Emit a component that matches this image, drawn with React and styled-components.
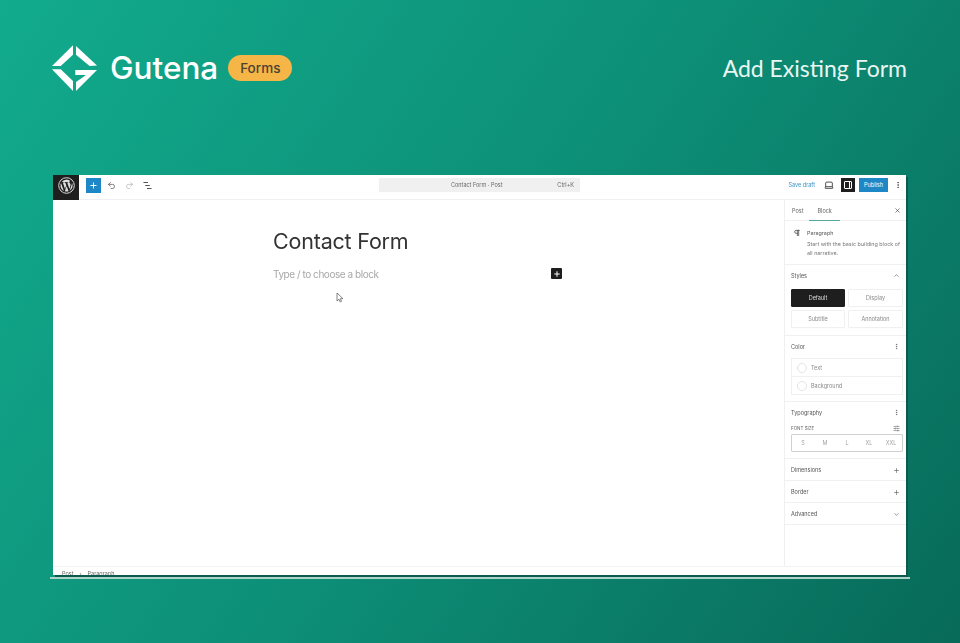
import * as React from "react";
import styled, { createGlobalStyle } from "styled-components";
import { Plus, Undo2, Redo2, Laptop, MoreVertical, X, ChevronUp, ChevronDown, SlidersHorizontal, Pilcrow } from "lucide-react";

const GlobalStyle = createGlobalStyle`
  html, body { margin: 0; padding: 0; }
  body { font-family: "Inter", "Liberation Sans", sans-serif; }
`;

const GutenaLogo = () => (
  <svg width="46" height="46" viewBox="0 0 46 46" fill="#fff">
    <polygon points="21,0.300 0,21 8.700,21 21,9.700" />
    <polygon points="24,1 45,20.500 37.600,21 24,9.700" />
    <polygon points="0,24.300 8.700,24.300 21,36 21,46" />
    <polygon points="23.300,25 45,25 24,46 24,37 34,30 23.300,30" />
  </svg>
);

const WpLogo = () => (
  <svg width="17" height="17" viewBox="0 0 24 24">
    <circle cx="12" cy="12" r="11" fill="none" stroke="#ddd" strokeWidth="1.4" />
    <path
      fill="#ddd"
      d="M3.5 12c0 3.4 2 6.3 4.8 7.7L4.2 8.6A8.500 8.500 0 0 0 3.500 12zM17.700 11.600c0-1-.4-1.800-.7-2.300-.5-.7-.9-1.300-.9-2 0-.8.600-1.500 1.400-1.500h.100A8.500 8.500 0 0 0 5 7.300h.6c.9 0 2.300-.1 2.300-.1.500 0 .5.700 0 .7 0 0-.5.100-1 .1l3 9 1.800-5.500-1.300-3.500c-.4 0-.9-.1-.9-.1-.5 0-.4-.7 0-.7 0 0 1.400.1 2.300.1.900 0 2.300-.1 2.300-.1.500 0 .5.700 0 .7 0 0-.5.100-1 .1l3 8.900.8-2.800c.4-1.100.7-1.900.7-2.600zM12.200 12.700l-2.500 7.400a8.500 8.500 0 0 0 5.200-.1l-.1-.1zM19.500 7.900c0 .3.100.6.100.9 0 .9-.2 1.900-.7 3.100l-2.600 7.500a8.500 8.500 0 0 0 3.200-11.500z"
    />
  </svg>
);

const ListViewIcon = () => (
  <svg width="10" height="9" viewBox="0 0 10 9" stroke="currentColor" strokeWidth="1.2">
    <path d="M0.500 1.200h5M2.500 4.500h5M4.500 7.800h5" />
  </svg>
);

const Cursor = () => (
  <svg width="8" height="11" viewBox="0 0 8 11">
    <path d="M1 1v8l2-1.800 1.200 2.800 1.300-.6L4.300 6.700H7z" fill="#fff" stroke="#666" strokeWidth="0.8" />
  </svg>
);

const Page = styled.div`
  box-sizing: border-box;
  width: 960px;
  height: 643px;
  overflow: hidden;
  padding: 45px 53px 0 52px;
  background: linear-gradient(125deg, #12ab8d 0%, #0d8f77 50%, #086a59 100%);
`;

const Header = styled.header`
  display: flex;
  justify-content: space-between;
  align-items: center;
  height: 46px;
`;

const Brand = styled.div`
  display: flex;
  align-items: center;
`;

const BrandName = styled.span`
  margin-left: 12px;
  font-family: "Inter", sans-serif;
  font-size: 31.500px;
  font-weight: 500;
  line-height: 46px;
  color: #fff;
`;

const Badge = styled.span`
  margin-left: 10px;
  width: 64px;
  height: 26px;
  border-radius: 13px;
  background: #f5b547;
  color: #4a4232;
  font-family: "Inter", sans-serif;
  font-size: 13.500px;
  font-weight: 500;
  line-height: 26px;
  text-align: center;
`;

const Heading = styled.div`
  font-family: "Lato", sans-serif;
  font-size: 23px;
  line-height: 46px;
  color: #e9f6f2;
`;

const Editor = styled.div`
  display: flex;
  flex-direction: column;
  width: 853px;
  height: 400px;
  margin: 84px 0 0 1px;
  background: #fff;
  overflow: hidden;
  box-shadow: 2px 2px 0 #0a5b4d;
  filter: blur(0.4px);
`;

const Rule = styled.div`
  width: 860px;
  height: 2px;
  margin: 2px 0 0 -2px;
  background: #aed4ca;
`;

const TopBar = styled.div`
  flex: none;
  box-sizing: border-box;
  display: grid;
  grid-template-columns: 1fr 201px 1fr;
  align-items: center;
  height: 25px;
  border-bottom: 1px solid #eef1f0;
`;

const TopLeft = styled.div`
  display: flex;
  align-items: center;
  height: 25px;
  color: #555;
`;

const WpTile = styled.div`
  box-sizing: border-box;
  display: flex;
  align-items: center;
  justify-content: center;
  width: 26px;
  height: 25px;
  padding-bottom: 5px;
  background: #1e1e1e;
  margin-right: 7px;
`;

const ToolGroup = styled.div`
  display: flex;
  align-items: center;
  padding-bottom: 5px;
`;

const AddButton = styled.div`
  display: flex;
  align-items: center;
  justify-content: center;
  width: 15px;
  height: 15px;
  margin-right: 6px;
  background: #1e88c7;
  color: #fff;
`;

const ToolIcon = styled.span`
  display: flex;
  width: 9px;
  margin-right: 9px;
  color: ${({ $muted }) => ($muted ? "#b5b5b5" : "#555")};
`;

const Command = styled.div`
  display: flex;
  align-items: center;
  justify-content: space-between;
  height: 14px;
  margin-bottom: 5px;
  padding: 0 6px 0 72px;
  background: #f0f0f0;
  font-size: 5.5px;
  color: #666;
`;

const TopRight = styled.div`
  display: flex;
  align-items: center;
  justify-content: flex-end;
  margin-bottom: 5px;
  padding-right: 4px;
  color: #333;
`;

const SaveDraft = styled.span`
  margin-right: 9px;
  font-size: 5.5px;
  color: #3b93c3;
`;

const PanelToggle = styled.div`
  display: flex;
  align-items: center;
  justify-content: center;
  width: 14px;
  height: 14px;
  margin: 0 4px 0 7px;
  background: #1e1e1e;
`;

const PanelGlyph = styled.div`
  box-sizing: border-box;
  width: 8px;
  height: 8px;
  border: 1px solid #fff;
  border-radius: 1px;
  background: linear-gradient(#fff, #fff) no-repeat 70% 0 / 1px 100%;
`;

const Publish = styled.div`
  width: 29px;
  height: 14px;
  margin-right: 6px;
  background: #1e88c7;
  color: #fff;
  font-size: 5.5px;
  line-height: 14px;
  text-align: center;
`;

const Body = styled.div`
  flex: 1;
  display: flex;
  min-height: 0;
`;

const Canvas = styled.main`
  flex: 1;
  position: relative;
  padding: 28px 0 0 220px;
`;

const PostTitle = styled.h1`
  margin: 0;
  font-size: 21.500px;
  font-weight: 400;
  line-height: 27px;
  letter-spacing: -0.2px;
  color: #333;
`;

const PlaceholderRow = styled.div`
  display: flex;
  align-items: flex-start;
  justify-content: space-between;
  width: 289px;
  margin-top: 12px;
`;

const Placeholder = styled.span`
  font-size: 10px;
  line-height: 14px;
  letter-spacing: -0.45px;
  color: #a8a8a8;
`;

const InsertButton = styled.div`
  display: flex;
  align-items: center;
  justify-content: center;
  width: 11px;
  height: 11px;
  margin-top: 1px;
  border-radius: 1px;
  background: #1e1e1e;
  color: #fff;
`;

const Pointer = styled.div`
  position: absolute;
  left: 283px;
  top: 92px;
  line-height: 0;
`;

const Sidebar = styled.aside`
  flex: none;
  display: flex;
  flex-direction: column;
  box-sizing: border-box;
  width: 122px;
  border-left: 1px solid #eef1f0;
  font-size: 5.500px;
  color: #555;
`;

const Tabs = styled.div`
  display: flex;
  align-items: stretch;
  height: 21px;
  box-sizing: border-box;
  padding: 1px 5px 0 7px;
  border-bottom: 1px solid #f0f0f0;
`;

const Tab = styled.div`
  display: flex;
  align-items: center;
  padding: 0 ${({ $active }) => ($active ? "8px" : "0")};
  margin-right: ${({ $active }) => ($active ? "auto" : "6px")};
  border-bottom: 1px solid ${({ $active }) => ($active ? "#5aa7a0" : "transparent")};
  margin-bottom: -1px;
  color: #666;
`;

const CloseWrap = styled.div`
  display: flex;
  align-items: center;
  color: #333;
`;

const BlockCard = styled.div`
  display: flex;
  gap: 6px;
  height: 44px;
  box-sizing: border-box;
  padding: 8px 2px 0 8px;
  border-bottom: 1px solid #f0f0f0;
  & > svg {
    flex: none;
  }
`;

const BlockText = styled.div`
  display: flex;
  flex-direction: column;
  gap: 2px;
  font-size: 5.400px;
  line-height: 9px;
  color: #777;
`;

const BlockName = styled.div`
  color: #555;
`;

const Section = styled.section`
  box-sizing: border-box;
  height: ${({ $height }) => $height}px;
  padding: 0 3px 0 6px;
  border-bottom: 1px solid #f0f0f0;
`;

const SectionHead = styled.div`
  display: flex;
  align-items: center;
  justify-content: space-between;
  height: ${({ $height }) => $height || 21}px;
  padding-right: 3px;
  color: #555;
`;

const StyleGrid = styled.div`
  display: grid;
  grid-template-columns: 54px 55px;
  grid-auto-rows: 18px;
  gap: 3px;
  margin-top: 3px;
`;

const StyleOption = styled.div`
  display: flex;
  align-items: center;
  justify-content: center;
  border: 1px solid ${({ $active }) => ($active ? "#1e1e1e" : "#f0f0f0")};
  border-radius: 1px;
  background: ${({ $active }) => ($active ? "#1e1e1e" : "#fff")};
  color: ${({ $active }) => ($active ? "#ddd" : "#888")};
`;

const ColorList = styled.div`
  border: 1px solid #f0f0f0;
  margin-top: 1px;
`;

const ColorRow = styled.div`
  display: flex;
  align-items: center;
  gap: 4px;
  height: 17px;
  padding-left: 5px;
  color: #888;
  & + & {
    border-top: 1px solid #f0f0f0;
  }
`;

const Swatch = styled.span`
  box-sizing: border-box;
  width: 10px;
  height: 10px;
  border: 1px solid #e3e3e3;
  border-radius: 50%;
`;

const SizeLabel = styled.div`
  display: flex;
  align-items: center;
  justify-content: space-between;
  height: 10px;
  padding-right: 3px;
  font-size: 4.500px;
  color: #666;
`;

const SizeBar = styled.div`
  box-sizing: border-box;
  display: grid;
  grid-template-columns: repeat(5, 1fr);
  align-items: center;
  height: 18px;
  margin-top: 1px;
  border: 1px solid #d0d0d0;
  border-radius: 1px;
  color: #a5a5a5;
  text-align: center;
`;

const Crumbs = styled.footer`
  flex: none;
  display: flex;
  gap: 6px;
  height: 5px;
  padding: 3px 0 0 9px;
  border-top: 1px solid #f2f2f2;
  font-size: 5.500px;
  line-height: 8px;
  color: #666;
`;

const Small = ({ icon: Icon, size = 7 }) => <Icon size={size} strokeWidth={2} />;

export default function App() {
  return (
    <>
      <GlobalStyle />
      <Page>
        <Header>
          <Brand>
            <GutenaLogo />
            <BrandName>Gutena</BrandName>
            <Badge>Forms</Badge>
          </Brand>
          <Heading>Add Existing Form</Heading>
        </Header>
        <Editor>
          <TopBar>
            <TopLeft>
              <WpTile>
                <WpLogo />
              </WpTile>
              <ToolGroup>
                <AddButton>
                  <Plus size={9} strokeWidth={2.5} />
                </AddButton>
                <ToolIcon><Undo2 size={9} /></ToolIcon>
                <ToolIcon $muted><Redo2 size={9} /></ToolIcon>
                <ToolIcon><ListViewIcon /></ToolIcon>
              </ToolGroup>
            </TopLeft>
            <Command>
              <span>Contact Form · Post</span>
              <span>Ctrl+K</span>
            </Command>
            <TopRight>
              <SaveDraft>Save draft</SaveDraft>
              <Laptop size={10} />
              <PanelToggle><PanelGlyph /></PanelToggle>
              <Publish>Publish</Publish>
              <MoreVertical size={8} />
            </TopRight>
          </TopBar>
          <Body>
            <Canvas>
              <PostTitle>Contact Form</PostTitle>
              <PlaceholderRow>
                <Placeholder>Type / to choose a block</Placeholder>
                <InsertButton><Plus size={8} strokeWidth={3} /></InsertButton>
              </PlaceholderRow>
              <Pointer><Cursor /></Pointer>
            </Canvas>
            <Sidebar>
              <Tabs>
                <Tab>Post</Tab>
                <Tab $active>Block</Tab>
                <CloseWrap><Small icon={X} /></CloseWrap>
              </Tabs>
              <BlockCard>
                <Pilcrow size={8} strokeWidth={2.5} />
                <BlockText>
                  <BlockName>Paragraph</BlockName>
                  <div>Start with the basic building block of all narrative.</div>
                </BlockText>
              </BlockCard>
              <Section $height={71}>
                <SectionHead><span>Styles</span><Small icon={ChevronUp} /></SectionHead>
                <StyleGrid>
                  <StyleOption $active>Default</StyleOption>
                  <StyleOption>Display</StyleOption>
                  <StyleOption>Subtitle</StyleOption>
                  <StyleOption>Annotation</StyleOption>
                </StyleGrid>
              </Section>
              <Section $height={66}>
                <SectionHead><span>Color</span><Small icon={MoreVertical} /></SectionHead>
                <ColorList>
                  <ColorRow><Swatch />Text</ColorRow>
                  <ColorRow><Swatch />Background</ColorRow>
                </ColorList>
              </Section>
              <Section $height={57}>
                <SectionHead><span>Typography</span><Small icon={MoreVertical} /></SectionHead>
                <SizeLabel><span>FONT SIZE</span><Small icon={SlidersHorizontal} /></SizeLabel>
                <SizeBar>
                  <span>S</span><span>M</span><span>L</span><span>XL</span><span>XXL</span>
                </SizeBar>
              </Section>
              <Section $height={22}>
                <SectionHead $height={22}><span>Dimensions</span><Small icon={Plus} /></SectionHead>
              </Section>
              <Section $height={22}>
                <SectionHead $height={22}><span>Border</span><Small icon={Plus} /></SectionHead>
              </Section>
              <Section $height={22}>
                <SectionHead $height={22}><span>Advanced</span><Small icon={ChevronDown} /></SectionHead>
              </Section>
            </Sidebar>
          </Body>
          <Crumbs>
            <span>Post</span>
            <span>›</span>
            <span>Paragraph</span>
          </Crumbs>
        </Editor>
        <Rule />
      </Page>
    </>
  );
}
